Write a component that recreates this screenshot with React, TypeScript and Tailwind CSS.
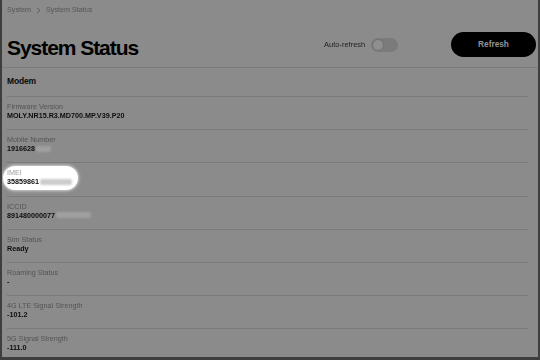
import React from "react";

const rows: { label: string; value: string; blur?: number; hl?: boolean }[] = [
  { label: "Firmware Version", value: "MOLY.NR15.R3.MD700.MP.V39.P20" },
  { label: "Mobile Number", value: "1916628", blur: 15 },
  { label: "IMEI", value: "35859861", blur: 32, hl: true },
  { label: "ICCID", value: "891480000077", blur: 35 },
  { label: "Sim Status", value: "Ready" },
  { label: "Roaming Status", value: "-" },
  { label: "4G LTE Signal Strength", value: "-101.2" },
  { label: "5G Signal Strength", value: "-111.0" },
];

function Row({ r }: { r: (typeof rows)[number] }) {
  const inner = (
    <>
      <div className={`w-fit text-[7.2px] leading-[9px] [will-change:transform] ${r.hl ? "text-[#9c9c9c]" : "text-[#545454]"}`}>
        {r.label}
      </div>
      <div className="flex items-center text-[7.2px] font-bold leading-[9px] text-[#0d0d0d]">
        <span className="text-[#0d0d0d] [will-change:transform]">{r.value}</span>
        {r.blur ? (
          <span
            className={`ml-[1px] h-[6px] rounded-[2px] blur-[0.8px] ${r.hl ? "bg-[#cccccc]" : "bg-[#a0a0a0]"}`}
            style={{ width: r.blur }}
          />
        ) : null}
      </div>
    </>
  );
  return (
    <div className="h-[33.2px] shrink-0 border-t border-[#7a7a7a] pt-[5px]">
      {r.hl ? (
        <div className="-ml-[4px] -mt-[2.5px] w-fit rounded-full bg-white pl-[4px] pr-[6px] pt-[2.5px] pb-[3.5px] shadow-[0_0_3px_1px_rgba(255,255,255,0.6)]">
          {inner}
        </div>
      ) : (
        inner
      )}
    </div>
  );
}

export default function App() {
  return (
    <div
      className="box-border flex h-[360px] w-[540px] flex-col overflow-hidden border-x-2 border-b-[3px] border-[#3e3e3e] bg-[#8b8b8b]"
      style={{ fontFamily: '"Liberation Sans", Arial, sans-serif' }}
    >
      <div className="pl-[5px] pr-[2px]">
        <div className="flex h-[15px] items-center gap-[5px] pt-[5px] text-[7.2px] text-[#555555]">
          <span className="[will-change:transform]">System</span>
          <svg width="5" height="7" viewBox="0 0 5 7" fill="none" stroke="#555555" strokeWidth="0.8">
            <path d="M1 0.8 L4 3.5 L1 6.2" />
          </svg>
          <span className="[will-change:transform]">System Status</span>
        </div>
        <div className="flex h-[52px] items-start justify-between">
          <h1 className="mt-[22px] text-[21px] font-bold leading-[21px] tracking-[-0.05em] text-black">System Status</h1>
          <div className="mt-[17px] flex items-center">
            <span className="text-[7.5px] text-[#222222] [will-change:transform]">Auto-refresh</span>
            <div className="ml-[6px] flex h-[14px] w-[27px] items-center rounded-full bg-[#7b7b7b] pl-[1px]">
              <div className="h-[12px] w-[12px] rounded-full border border-[#727272] bg-[#8f8f8f]" />
            </div>
            <button className="ml-[53px] flex h-[25px] w-[85px] items-center justify-center rounded-full bg-black text-[8.3px] font-bold text-[#949494]">
              Refresh
            </button>
          </div>
        </div>
      </div>
      <div className="flex h-[29px] shrink-0 items-center border-t border-[#7a7a7a] pl-[5px] pb-[2px] text-[8.5px] font-bold tracking-[-0.02em] text-[#0a0a0a]">
        Modem
      </div>
      <div className="flex flex-col pl-[5px] pr-[10px]">
        {rows.map((r) => (
          <Row key={r.label} r={r} />
        ))}
      </div>
    </div>
  );
}
